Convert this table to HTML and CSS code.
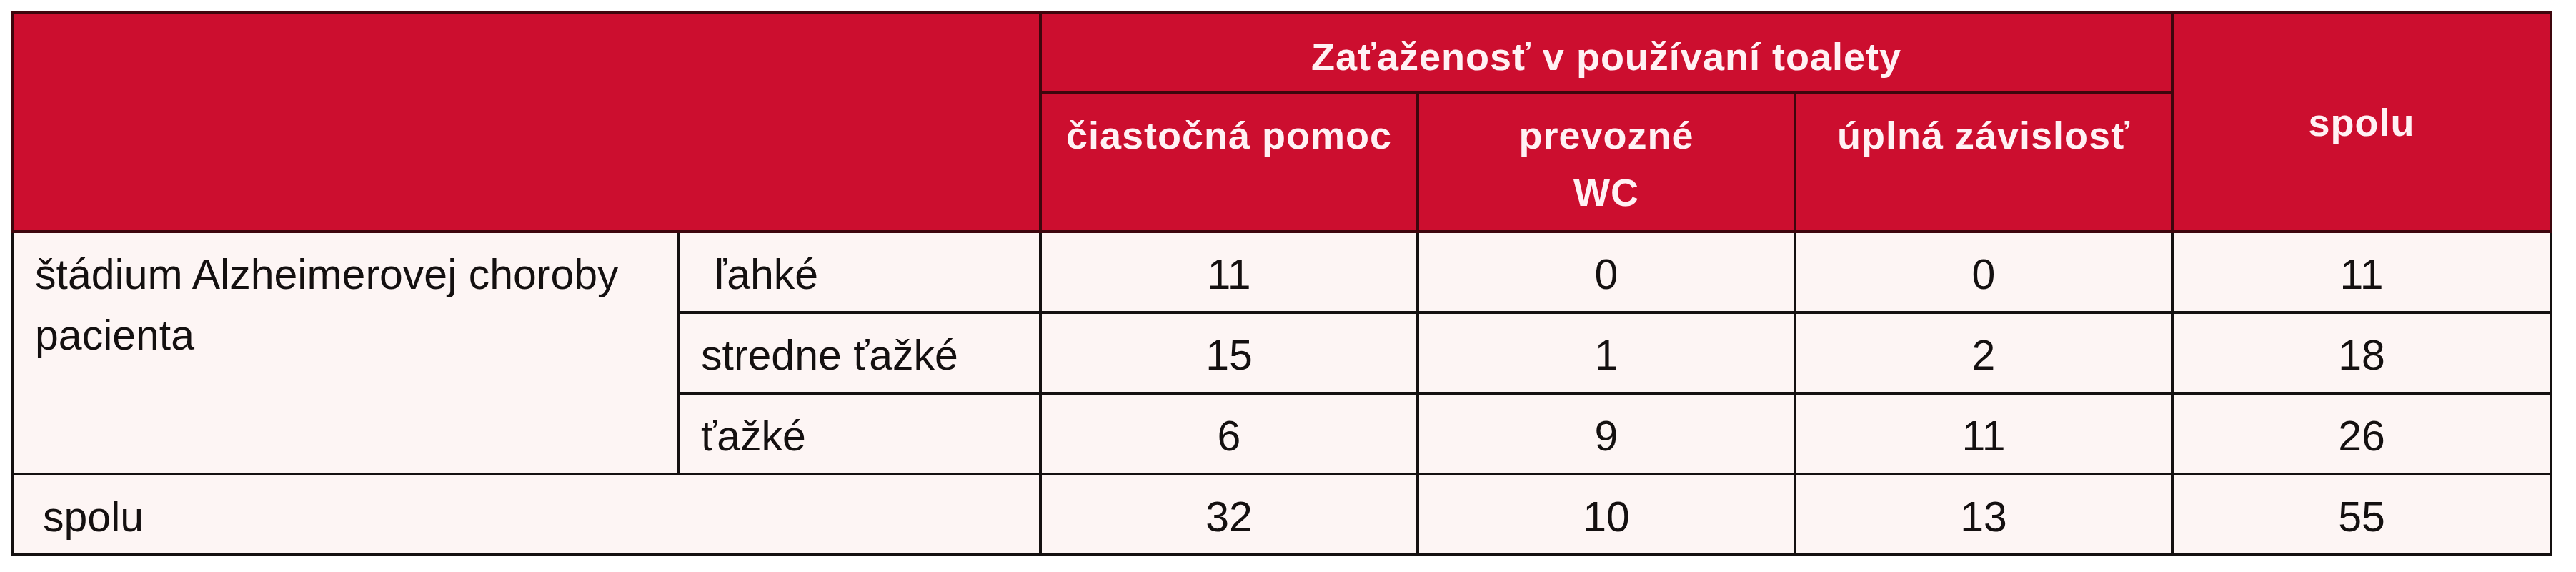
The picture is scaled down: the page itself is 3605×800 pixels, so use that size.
FILE: index.html
```html
<!DOCTYPE html>
<html lang="sk">
<head>
<meta charset="utf-8">
<title>Zaťaženosť v používaní toalety</title>
<link rel="stylesheet" href="styles.css">
</head>
<body>
<div class="sheet">
  <table class="data">
    <colgroup>
      <col class="c-stage">
      <col class="c-level">
      <col class="c-num">
      <col class="c-num">
      <col class="c-num">
      <col class="c-total">
    </colgroup>
    <thead>
      <tr class="h-top">
        <th class="h-blank" colspan="2" rowspan="2"></th>
        <th class="h-group" colspan="3">Zaťaženosť v používaní toalety</th>
        <th class="h-total" rowspan="2">spolu</th>
      </tr>
      <tr class="h-sub">
        <th class="h-col">čiastočná pomoc</th>
        <th class="h-col">prevozné<br>WC</th>
        <th class="h-col">úplná závislosť</th>
      </tr>
    </thead>
    <tbody>
      <tr class="row">
        <td class="label" rowspan="3">štádium Alzheimerovej choroby<br>pacienta</td>
        <td class="label lead-a">ľahké</td>
        <td class="num">11</td>
        <td class="num">0</td>
        <td class="num">0</td>
        <td class="num">11</td>
      </tr>
      <tr class="row">
        <td class="label">stredne ťažké</td>
        <td class="num">15</td>
        <td class="num">1</td>
        <td class="num">2</td>
        <td class="num">18</td>
      </tr>
      <tr class="row">
        <td class="label">ťažké</td>
        <td class="num">6</td>
        <td class="num">9</td>
        <td class="num">11</td>
        <td class="num">26</td>
      </tr>
      <tr class="row">
        <td class="label lead-b" colspan="2">spolu</td>
        <td class="num">32</td>
        <td class="num">10</td>
        <td class="num">13</td>
        <td class="num">55</td>
      </tr>
    </tbody>
  </table>
</div>
</body>
</html>
```

FILE: styles.css
```css
html, body {
  margin: 0;
  padding: 0;
  background: #ffffff;
}

.sheet {
  padding: 15px 0 0 15px;
}

.data {
  border-collapse: collapse;
  table-layout: fixed;
  width: 3555px;
  font-family: "Liberation Sans", Arial, sans-serif;
  border: 4px solid #1a0a0c;
}

.c-stage { width: 932px; }
.c-level { width: 507px; }
.c-num { width: 528px; }
.c-total { width: 530px; }

/* header */
thead th {
  background: #cc0e2f;
  color: #fff1f4;
  font-weight: 700;
  font-size: 54px;
  letter-spacing: 1px;
  line-height: 80px;
  text-align: center;
  border: 4px solid #3e060d;
  padding: 0 10px;
}

.h-top { height: 112px; }
.h-sub { height: 195px; }

.h-group {
  vertical-align: top;
  padding-top: 20px;
}

.h-col {
  vertical-align: top;
  padding-top: 18px;
}

.h-total {
  vertical-align: middle;
}

/* body */
tbody td {
  background: #fdf5f4;
  color: #141010;
  font-size: 59px;
  line-height: 85px;
  border: 4px solid #141010;
  vertical-align: top;
  padding: 16px 10px 0 10px;
}

.row { height: 113px; }

.label {
  text-align: left;
  padding-left: 30px;
}

.lead-a { text-indent: 19px; }
.lead-b { text-indent: 11px; }

.num {
  text-align: center;
}
```
